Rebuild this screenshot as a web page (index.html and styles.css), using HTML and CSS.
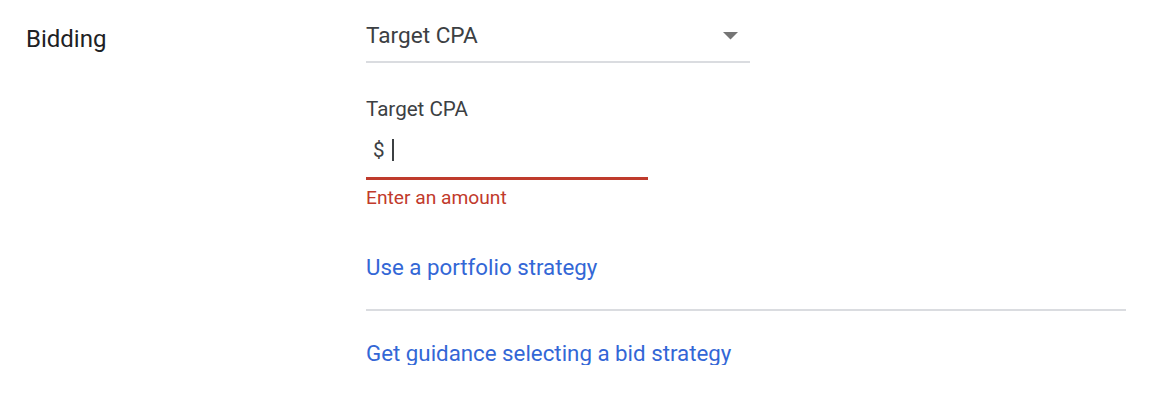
FILE: index.html
```html
<!DOCTYPE html>
<html lang="en">
<head>
<meta charset="utf-8">
<title>Bidding</title>
<link rel="stylesheet" href="styles.css">
</head>
<body>
<section class="row">
  <div class="label">Bidding</div>
  <div class="content">
    <div class="select">
      <span class="select-value">Target CPA</span>
      <svg class="arrow" width="15" height="8" viewBox="0 0 15 8"><polygon points="0,0 15,0 7.5,7.5" fill="#757575"/></svg>
    </div>
    <div class="field-label">Target CPA</div>
    <div class="input">
      <span class="currency">$</span><span class="cursor"></span>
    </div>
    <div class="error">Enter an amount</div>
    <a class="link first" href="#">Use a portfolio strategy</a>
    <div class="divider"></div>
    <a class="link" href="#">Get guidance selecting a bid strategy</a>
  </div>
</section>
</body>
</html>
```

FILE: styles.css
```css
html, body {
  margin: 0;
  padding: 0;
  background: #ffffff;
}
body {
  font-family: Roboto, "Liberation Sans", Arial, sans-serif;
  color: #3c4043;
}
.row {
  display: flex;
  padding: 22px 0 0 26px;
}
.label {
  width: 340px;
  flex: none;
  font-size: 24px;
  line-height: 28px;
  padding-top: 3px;
  color: #202124;
}
.content {
  display: flex;
  flex-direction: column;
  align-items: flex-start;
  width: 760px;
}
.select {
  display: flex;
  align-items: center;
  justify-content: space-between;
  width: 384px;
  height: 28px;
  padding-bottom: 11px;
  border-bottom: 2px solid #dadce0;
  font-size: 22.6px;
  line-height: 28px;
}
.arrow {
  margin-right: 12px;
}
.field-label {
  margin-top: 34px;
  font-size: 20.6px;
  line-height: 24px;
}
.input {
  display: flex;
  align-items: center;
  width: 282px;
  height: 24px;
  margin-top: 17px;
  padding-bottom: 15px;
  border-bottom: 3px solid #bf3b2c;
  font-size: 20.6px;
  line-height: 24px;
}
.currency {
  margin-left: 7px;
}
.cursor {
  width: 2px;
  height: 22px;
  margin-left: 7px;
  background: #3c4043;
}
.error {
  margin-top: 7px;
  font-size: 19.2px;
  line-height: 22px;
  color: #c13a2b;
}
.link {
  font-size: 22.3px;
  line-height: 24px;
  color: #3367d6;
  text-decoration: none;
}
.link.first {
  margin-top: 46px;
}
.divider {
  align-self: stretch;
  height: 2px;
  margin: 30px 0 30px;
  background: #dadce0;
}
```
